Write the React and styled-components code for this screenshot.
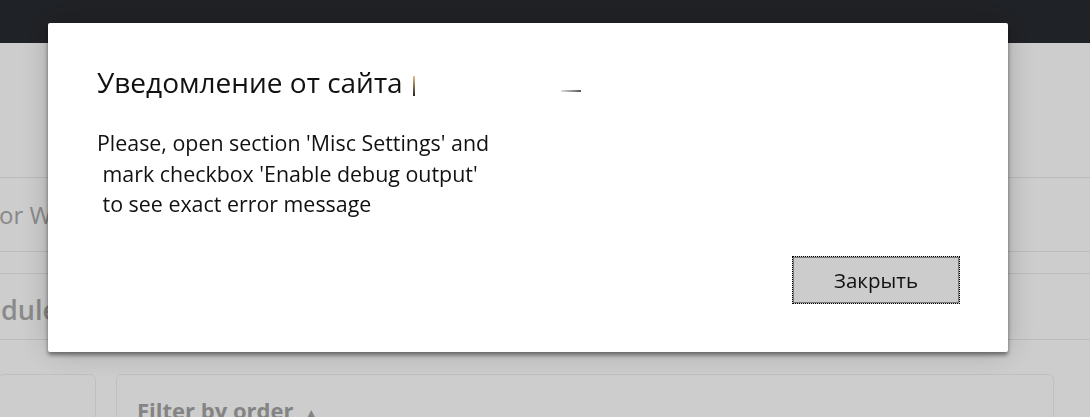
import styled, { createGlobalStyle } from "styled-components";

const GlobalStyle = createGlobalStyle`
  html, body {
    margin: 0;
    padding: 0;
    width: 1090px;
    height: 417px;
    overflow: hidden;
    font-family: "Open Sans", "Noto Sans", sans-serif;
  }
`;

const App = () => {
  return (
    <>
      <GlobalStyle />
      <Page>
        <TopBar />
        <Content>
          <Spacer height="134px" />
          <SearchRow>
            <Placeholder>or Workflows</Placeholder>
          </SearchRow>
          <Gap />
          <SectionRow>
            <SectionTitle>Schedule</SectionTitle>
          </SectionRow>
          <Cards>
            <Card width="98px" />
            <Card grow>
              <FilterTitle>
                Filter by order <Arrow>▲</Arrow>
              </FilterTitle>
            </Card>
          </Cards>
        </Content>
      </Page>
      <Overlay>
        <Dialog>
          <Title>
            Уведомление от сайта <Redacted />
            <Smudge />
          </Title>
          <Message>
            {"Please, open section 'Misc Settings' and\n mark checkbox 'Enable debug output'\n to see exact error message"}
          </Message>
          <Footer>
            <CloseButton>Закрыть</CloseButton>
          </Footer>
        </Dialog>
      </Overlay>
    </>
  );
};

const Page = styled.div`
  width: 1090px;
  height: 417px;
  background: #fbfbfb;
  display: flex;
  flex-direction: column;
`;

const TopBar = styled.div`
  height: 43px;
  background: #272a2f;
  flex-shrink: 0;
`;

const Content = styled.div`
  display: flex;
  flex-direction: column;
`;

const Spacer = styled.div`
  height: ${({ height }) => height};
  border-bottom: 1px solid #e4e4e4;
`;

const SearchRow = styled.div`
  height: 73px;
  display: flex;
  align-items: center;
  border-bottom: 1px solid #e6e6e6;
`;

const Placeholder = styled.span`
  font-size: 24px;
  color: #a8a8a8;
  margin-left: -1px;
`;

const Gap = styled.div`
  height: 21px;
  border-bottom: 1px solid #e6e6e6;
`;

const SectionRow = styled.div`
  height: 65px;
  display: flex;
  align-items: center;
  border-bottom: 1px solid #e6e6e6;
`;

const SectionTitle = styled.span`
  font-size: 27px;
  font-weight: 600;
  color: #a9a9a9;
  margin-left: -60px;
  margin-top: 6px;
`;

const Cards = styled.div`
  display: flex;
  gap: 20px;
  padding-top: 34px;
  padding-right: 36px;
`;

const Card = styled.div`
  ${({ width }) => (width ? `width: ${width};` : "")}
  ${({ grow }) => (grow ? "flex: 1;" : "")}
  height: 60px;
  border: 1px solid #ebebeb;
  border-radius: 6px;
  margin-left: ${({ width }) => (width ? "-2px" : "0")};
  padding: 20px 20px 0;
  box-sizing: border-box;
  overflow: hidden;
`;

const FilterTitle = styled.div`
  font-size: 22px;
  font-weight: 700;
  color: #a2a2a2;
  line-height: 30px;
`;

const Arrow = styled.span`
  font-size: 12px;
  margin-left: 6px;
  vertical-align: middle;
`;

const Overlay = styled.div`
  position: fixed;
  inset: 0;
  background: rgba(0, 0, 0, 0.18);
  padding: 23px 0 0 48px;
  box-sizing: border-box;
`;

const Dialog = styled.div`
  width: 960px;
  height: 329px;
  background: #ffffff;
  border-radius: 2px;
  box-sizing: border-box;
  padding: 42px 48px 48px 49px;
  display: flex;
  flex-direction: column;
  box-shadow: 0 3px 4px rgba(0, 0, 0, 0.45), 0 0 30px rgba(0, 0, 0, 0.22);
`;

const Title = styled.div`
  font-size: 28px;
  line-height: 34px;
  color: #111111;
  display: flex;
  align-items: center;
`;

const Redacted = styled.span`
  display: inline-block;
  width: 2px;
  height: 20px;
  margin-left: 10px;
  margin-top: 8px;
  background: linear-gradient(#e8c08a, #222222);
`;

const Smudge = styled.span`
  display: inline-block;
  width: 20px;
  height: 2px;
  margin-left: 146px;
  margin-top: 18px;
  background: linear-gradient(90deg, #e0e0e0, #555555);
`;

const Message = styled.div`
  margin-top: 29px;
  font-size: 21.4px;
  line-height: 30.5px;
  color: #111111;
  white-space: pre-wrap;
`;

const Footer = styled.div`
  margin-top: auto;
  display: flex;
  justify-content: flex-end;
`;

const CloseButton = styled.button`
  width: 168px;
  height: 48px;
  background: #cccccc;
  border: 1px dotted #000000;
  outline: 1px solid #777777;
  outline-offset: -2px;
  font-family: "Open Sans", "Noto Sans", sans-serif;
  font-size: 20.5px;
  color: #111111;
  padding: 0;
`;

export default App;
